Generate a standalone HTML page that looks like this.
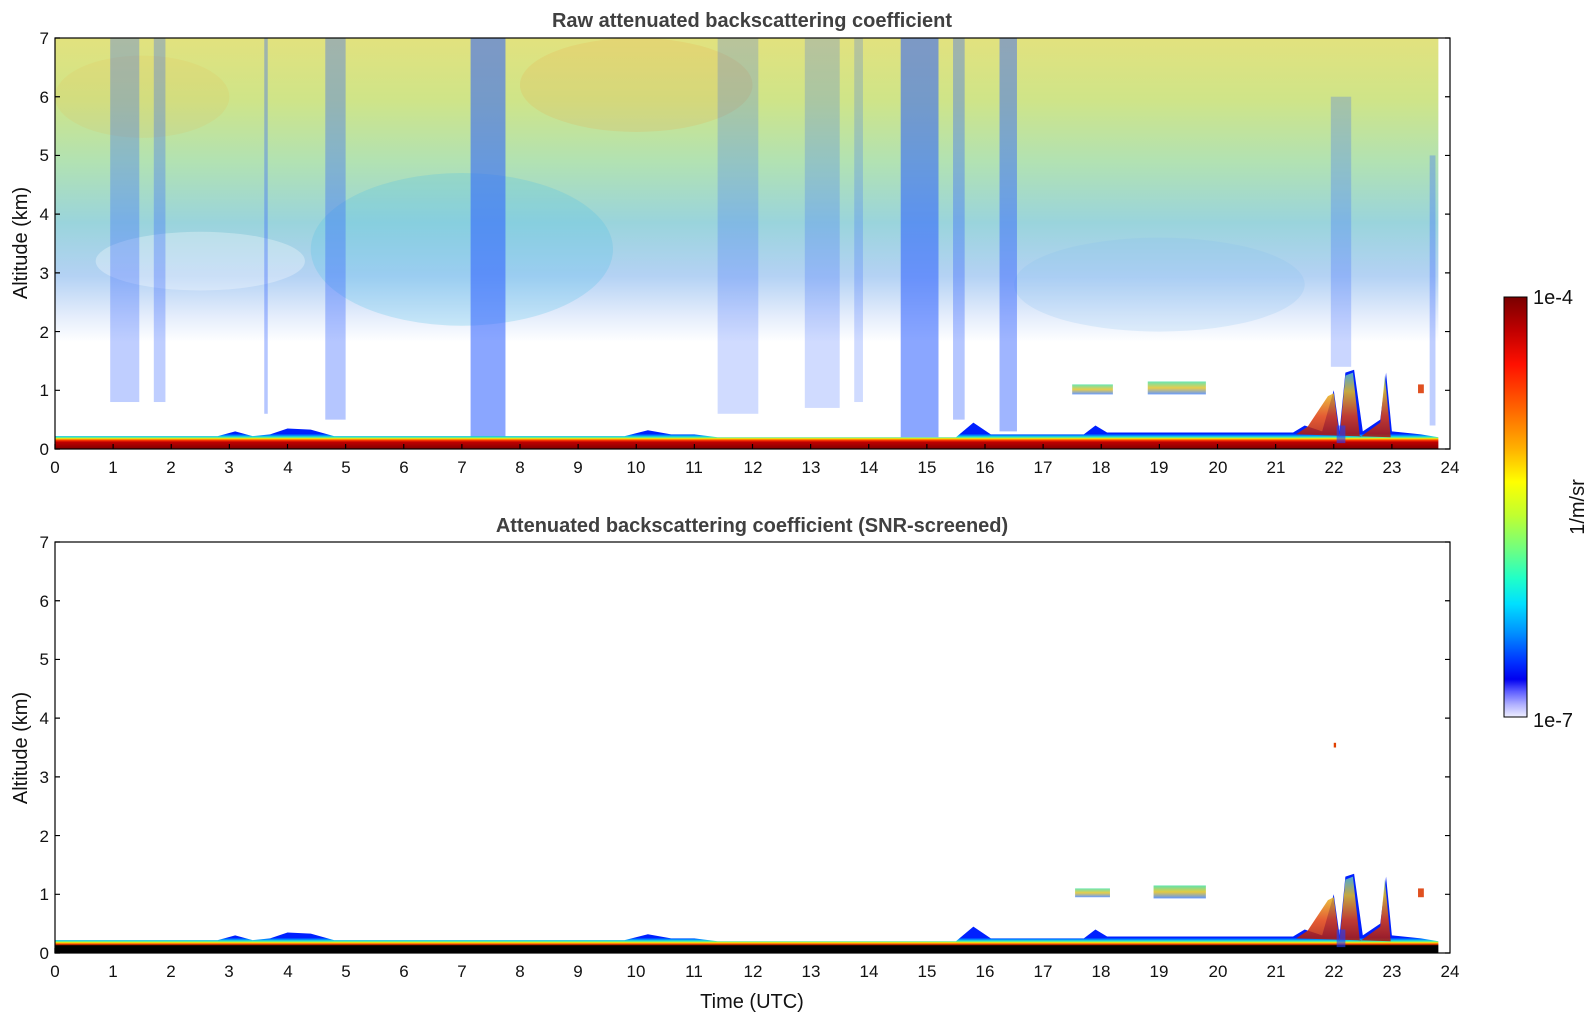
<!DOCTYPE html>
<html><head><meta charset="utf-8"><style>
html,body{margin:0;padding:0;background:#fff;width:1595px;height:1020px;overflow:hidden}
svg{display:block;font-family:"Liberation Sans","DejaVu Sans",sans-serif}
.tl{font-size:17px;fill:#111}
</style></head><body>
<svg width="1595" height="1020" viewBox="0 0 1595 1020">
<defs>
<linearGradient id="field" x1="0" y1="0" x2="0" y2="7" gradientUnits="userSpaceOnUse">
<stop offset="0" stop-color="#e2e27e"/>
<stop offset="0.15" stop-color="#cfe488"/>
<stop offset="0.3" stop-color="#b2e2b2"/>
<stop offset="0.45" stop-color="#9ad4dc"/>
<stop offset="0.58" stop-color="#b4d2f4"/>
<stop offset="0.68" stop-color="#e6eefc"/>
<stop offset="0.74" stop-color="#ffffff"/>
</linearGradient>
<linearGradient id="band" x1="0" y1="6.74" x2="0" y2="7" gradientUnits="userSpaceOnUse">
<stop offset="0" stop-color="#0020ff"/>
<stop offset="0.12" stop-color="#0090ff"/>
<stop offset="0.22" stop-color="#30f0c0"/>
<stop offset="0.32" stop-color="#ffe000"/>
<stop offset="0.42" stop-color="#ff4000"/>
<stop offset="0.55" stop-color="#c00000"/>
<stop offset="1" stop-color="#800000"/>
</linearGradient>
<linearGradient id="band2" x1="0" y1="6.74" x2="0" y2="7" gradientUnits="userSpaceOnUse">
<stop offset="0" stop-color="#0020ff"/>
<stop offset="0.12" stop-color="#0090ff"/>
<stop offset="0.22" stop-color="#30f0c0"/>
<stop offset="0.32" stop-color="#ffe000"/>
<stop offset="0.42" stop-color="#ff4000"/>
<stop offset="0.52" stop-color="#000"/>
<stop offset="1" stop-color="#000"/>
</linearGradient>
<linearGradient id="cb" x1="0" y1="0" x2="0" y2="1">
<stop offset="0" stop-color="#7a0000"/>
<stop offset="0.08" stop-color="#c00000"/>
<stop offset="0.16" stop-color="#ff1000"/>
<stop offset="0.26" stop-color="#ff6000"/>
<stop offset="0.36" stop-color="#ffb000"/>
<stop offset="0.44" stop-color="#ffff00"/>
<stop offset="0.52" stop-color="#c0ff30"/>
<stop offset="0.6" stop-color="#70ff80"/>
<stop offset="0.67" stop-color="#20ffc8"/>
<stop offset="0.73" stop-color="#00e0ff"/>
<stop offset="0.8" stop-color="#0090ff"/>
<stop offset="0.87" stop-color="#0030ff"/>
<stop offset="0.91" stop-color="#0000f0"/>
<stop offset="0.94" stop-color="#6060ff"/>
<stop offset="0.97" stop-color="#b0b0ff"/>
<stop offset="1" stop-color="#eeeeff"/>
</linearGradient>
<linearGradient id="blob" x1="0" y1="0" x2="0" y2="1">
<stop offset="0" stop-color="#40e0a0"/><stop offset="0.5" stop-color="#e0c020"/><stop offset="1" stop-color="#4080ff"/>
</linearGradient>
<linearGradient id="spk" x1="0" y1="5.6" x2="0" y2="7" gradientUnits="userSpaceOnUse">
<stop offset="0" stop-color="#30c0ff"/><stop offset="0.3" stop-color="#e8c020"/><stop offset="0.6" stop-color="#e04010"/><stop offset="1" stop-color="#900000"/>
</linearGradient>
</defs>

<!-- TOP PANEL -->
<svg x="55" y="38" width="1395" height="411" viewBox="0 0 24 7" preserveAspectRatio="none">
<rect x="0" y="0" width="23.8" height="7" fill="url(#field)"/>
<ellipse cx="10" cy="0.8" rx="2" ry="0.8" fill="#f0a040" opacity="0.18"/>
<ellipse cx="1.5" cy="1" rx="1.5" ry="0.7" fill="#f0b040" opacity="0.12"/>
<ellipse cx="7" cy="3.6" rx="2.6" ry="1.3" fill="#50c0e8" opacity="0.25"/>
<ellipse cx="19" cy="4.2" rx="2.5" ry="0.8" fill="#80c0f0" opacity="0.2"/>
<ellipse cx="2.5" cy="3.8" rx="1.8" ry="0.5" fill="#fff" opacity="0.3"/>
<g fill="#2a5cff">
<rect x="0.95" y="0" width="0.5" height="6.2" opacity="0.3"/>
<rect x="1.7" y="0" width="0.2" height="6.2" opacity="0.3"/>
<rect x="3.6" y="0" width="0.06" height="6.4" opacity="0.35"/>
<rect x="4.65" y="0" width="0.35" height="6.5" opacity="0.35"/>
<rect x="7.15" y="0" width="0.6" height="6.8" opacity="0.55"/>
<rect x="11.4" y="0" width="0.7" height="6.4" opacity="0.22"/>
<rect x="12.9" y="0" width="0.6" height="6.3" opacity="0.22"/>
<rect x="13.75" y="0" width="0.15" height="6.2" opacity="0.22"/>
<rect x="14.55" y="0" width="0.65" height="6.8" opacity="0.55"/>
<rect x="15.45" y="0" width="0.2" height="6.5" opacity="0.35"/>
<rect x="16.25" y="0" width="0.3" height="6.7" opacity="0.45"/>
<rect x="21.95" y="1" width="0.35" height="4.6" opacity="0.25"/>
<rect x="23.65" y="2" width="0.1" height="4.6" opacity="0.3"/>
</g>
<rect x="17.5" y="5.9" width="0.7" height="0.17" fill="url(#blob)" opacity="0.8"/>
<rect x="18.8" y="5.85" width="1" height="0.22" fill="url(#blob)" opacity="0.8"/>
<rect x="23.45" y="5.9" width="0.1" height="0.15" fill="#e05020"/>
<path d="M0,6.78L2.8,6.78L3.1,6.7L3.4,6.78L3.7,6.75L4,6.65L4.4,6.67L4.8,6.78L9.8,6.78L10.2,6.68L10.6,6.75L11,6.75L11.4,6.8L15.5,6.8L15.8,6.55L16.1,6.75L17.7,6.75L17.9,6.6L18.1,6.72L21.3,6.72L21.5,6.6L21.8,6.7L22,6L22.1,6.7L22.2,5.7L22.35,5.65L22.5,6.7L22.8,6.5L22.9,5.7L23,6.7L23.5,6.75L23.8,6.8L23.8,7L0,7Z" fill="url(#band)"/>
<path d="M21.35,6.75L21.55,6.62L21.9,6.1L22,6.05L22.1,6.8L22.2,5.75L22.33,5.7L22.45,6.8L22.8,6.55L22.88,5.75L22.98,6.8Z" fill="url(#spk)" opacity="0.85"/>
<rect x="22.05" y="6.6" width="0.15" height="0.3" fill="#2040ff" opacity="0.6"/>
</svg>
<rect x="55" y="38" width="1395" height="411" fill="none" stroke="#000" stroke-width="1.2"/>
<path d="M55,449v-5m58.125,5v-5m58.125,5v-5m58.125,5v-5m58.125,5v-5m58.125,5v-5m58.125,5v-5m58.125,5v-5m58.125,5v-5m58.125,5v-5m58.125,5v-5m58.125,5v-5m58.125,5v-5m58.125,5v-5m58.125,5v-5m58.125,5v-5m58.125,5v-5m58.125,5v-5m58.125,5v-5m58.125,5v-5m58.125,5v-5m58.125,5v-5m58.125,5v-5m58.125,5v-5
M55,449h5m-5,-58.71h5m-5,-58.71h5m-5,-58.71h5m-5,-58.71h5m-5,-58.71h5m-5,-58.71h5m-5,-58.71h5
M1450,449h-5m5,-58.71h-5m5,-58.71h-5m5,-58.71h-5m5,-58.71h-5m5,-58.71h-5m5,-58.71h-5m5,-58.71h-5" stroke="#000" stroke-width="1.2" fill="none"/>

<!-- BOTTOM PANEL -->
<svg x="55" y="542" width="1395" height="411" viewBox="0 0 24 7" preserveAspectRatio="none">
<rect x="17.55" y="5.9" width="0.6" height="0.15" fill="url(#blob)" opacity="0.8"/>
<rect x="18.9" y="5.85" width="0.9" height="0.22" fill="url(#blob)" opacity="0.85"/>
<rect x="23.45" y="5.9" width="0.1" height="0.15" fill="#e05020"/>
<rect x="22" y="3.42" width="0.04" height="0.08" fill="#e04000"/>
<path d="M0,6.78L2.8,6.78L3.1,6.7L3.4,6.78L3.7,6.75L4,6.65L4.4,6.67L4.8,6.78L9.8,6.78L10.2,6.68L10.6,6.75L11,6.75L11.4,6.8L15.5,6.8L15.8,6.55L16.1,6.75L17.7,6.75L17.9,6.6L18.1,6.72L21.3,6.72L21.5,6.6L21.8,6.7L22,6L22.1,6.7L22.2,5.7L22.35,5.65L22.5,6.7L22.8,6.5L22.9,5.7L23,6.7L23.5,6.75L23.8,6.8L23.8,7L0,7Z" fill="url(#band2)"/>
<path d="M21.35,6.75L21.55,6.62L21.9,6.1L22,6.05L22.1,6.8L22.2,5.75L22.33,5.7L22.45,6.8L22.8,6.55L22.88,5.75L22.98,6.8Z" fill="url(#spk)" opacity="0.85"/>
<rect x="22.05" y="6.6" width="0.15" height="0.3" fill="#2040ff" opacity="0.6"/>
</svg>
<rect x="55" y="542" width="1395" height="411" fill="none" stroke="#000" stroke-width="1.2"/>
<path d="M55,953v-5m58.125,5v-5m58.125,5v-5m58.125,5v-5m58.125,5v-5m58.125,5v-5m58.125,5v-5m58.125,5v-5m58.125,5v-5m58.125,5v-5m58.125,5v-5m58.125,5v-5m58.125,5v-5m58.125,5v-5m58.125,5v-5m58.125,5v-5m58.125,5v-5m58.125,5v-5m58.125,5v-5m58.125,5v-5m58.125,5v-5m58.125,5v-5m58.125,5v-5m58.125,5v-5
M55,953h5m-5,-58.71h5m-5,-58.71h5m-5,-58.71h5m-5,-58.71h5m-5,-58.71h5m-5,-58.71h5m-5,-58.71h5
M1450,953h-5m5,-58.71h-5m5,-58.71h-5m5,-58.71h-5m5,-58.71h-5m5,-58.71h-5m5,-58.71h-5m5,-58.71h-5" stroke="#000" stroke-width="1.2" fill="none"/>

<!-- Titles -->
<text x="752" y="27" text-anchor="middle" font-size="20" font-weight="bold" fill="#404040">Raw attenuated backscattering coefficient</text>
<text x="752" y="532" text-anchor="middle" font-size="20" font-weight="bold" fill="#404040">Attenuated backscattering coefficient (SNR-screened)</text>
<text transform="translate(27,243) rotate(-90)" text-anchor="middle" font-size="20" fill="#111">Altitude (km)</text>
<text transform="translate(27,748) rotate(-90)" text-anchor="middle" font-size="20" fill="#111">Altitude (km)</text>
<text x="752" y="1008" text-anchor="middle" font-size="20" fill="#111">Time (UTC)</text>

<g class="tl" text-anchor="end">
<text x="49" y="44">7</text><text x="49" y="103">6</text><text x="49" y="161">5</text><text x="49" y="220">4</text><text x="49" y="279">3</text><text x="49" y="338">2</text><text x="49" y="396">1</text><text x="49" y="455">0</text>
<text x="49" y="548">7</text><text x="49" y="607">6</text><text x="49" y="665">5</text><text x="49" y="724">4</text><text x="49" y="783">3</text><text x="49" y="842">2</text><text x="49" y="900">1</text><text x="49" y="959">0</text>
</g>
<g class="tl" text-anchor="middle">
<text x="55" y="473">0</text><text x="113" y="473">1</text><text x="171" y="473">2</text><text x="229" y="473">3</text><text x="288" y="473">4</text><text x="346" y="473">5</text><text x="404" y="473">6</text><text x="462" y="473">7</text><text x="520" y="473">8</text><text x="578" y="473">9</text><text x="636" y="473">10</text><text x="694" y="473">11</text><text x="753" y="473">12</text><text x="811" y="473">13</text><text x="869" y="473">14</text><text x="927" y="473">15</text><text x="985" y="473">16</text><text x="1043" y="473">17</text><text x="1101" y="473">18</text><text x="1159" y="473">19</text><text x="1218" y="473">20</text><text x="1276" y="473">21</text><text x="1334" y="473">22</text><text x="1392" y="473">23</text><text x="1450" y="473">24</text>
<text x="55" y="977">0</text><text x="113" y="977">1</text><text x="171" y="977">2</text><text x="229" y="977">3</text><text x="288" y="977">4</text><text x="346" y="977">5</text><text x="404" y="977">6</text><text x="462" y="977">7</text><text x="520" y="977">8</text><text x="578" y="977">9</text><text x="636" y="977">10</text><text x="694" y="977">11</text><text x="753" y="977">12</text><text x="811" y="977">13</text><text x="869" y="977">14</text><text x="927" y="977">15</text><text x="985" y="977">16</text><text x="1043" y="977">17</text><text x="1101" y="977">18</text><text x="1159" y="977">19</text><text x="1218" y="977">20</text><text x="1276" y="977">21</text><text x="1334" y="977">22</text><text x="1392" y="977">23</text><text x="1450" y="977">24</text>
</g>

<rect x="1504" y="297" width="23" height="420" fill="url(#cb)" stroke="#000" stroke-width="1"/>
<text x="1533" y="304" font-size="20" fill="#111">1e-4</text>
<text x="1533" y="727" font-size="20" fill="#111">1e-7</text>
<text transform="translate(1584,507) rotate(-90)" text-anchor="middle" font-size="20" fill="#111">1/m/sr</text>
</svg>
</body></html>
